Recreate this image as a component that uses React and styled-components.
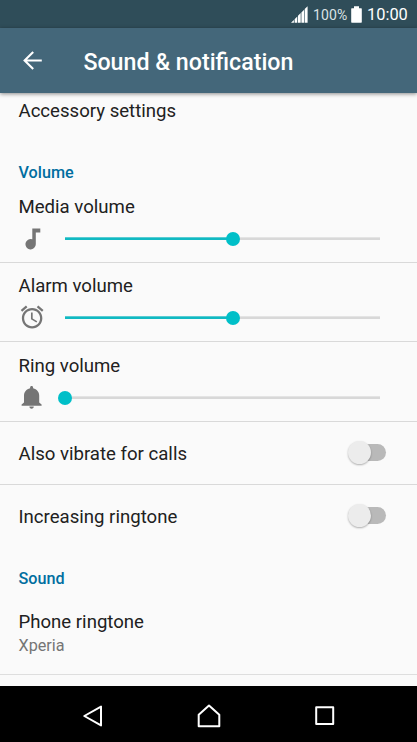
import React from "react";
import styled, { createGlobalStyle } from "styled-components";

const sliders = [
  { title: "Media volume", icon: <NoteIcon />, value: 53.3, height: 80, top: 12 },
  { title: "Alarm volume", icon: <AlarmIcon />, value: 53.3, height: 79, top: 11 },
  { title: "Ring volume", icon: <BellIcon />, value: 0, height: 80, top: 12 },
];

const toggles = ["Also vibrate for calls", "Increasing ringtone"];

export default function App() {
  return (
    <Screen>
      <GlobalStyle />
      <StatusBar>
        <SignalIcon />
        <Battery>100%</Battery>
        <BatteryIcon />
        <Clock>10:00</Clock>
      </StatusBar>
      <AppBar>
        <BackArrow />
        <h1>Sound &amp; notification</h1>
      </AppBar>
      <Content>
        <AccessoryRow>
          <Label>Accessory settings</Label>
        </AccessoryRow>
        <Section $height={54} $bottom={0}>
          Volume
        </Section>
        {sliders.map((item) => (
          <SliderRow key={item.title} $height={item.height} $top={item.top}>
            <Label>{item.title}</Label>
            <div className="control">
              {item.icon}
              <Slider>
                <div className="fill" style={{ width: `${item.value}%` }} />
                <div className="thumb" style={{ left: `${item.value}%` }} />
              </Slider>
            </div>
          </SliderRow>
        ))}
        {toggles.map((title, i) => (
          <ToggleRow key={title} $last={i === toggles.length - 1}>
            <Label>{title}</Label>
            <Switch>
              <span />
            </Switch>
          </ToggleRow>
        ))}
        <Section $height={42} $bottom={1}>
          Sound
        </Section>
        <RingtoneRow>
          <Label>Phone ringtone</Label>
          <p>Xperia</p>
        </RingtoneRow>
      </Content>
      <NavBar>
        <NavBack />
        <NavHome />
        <NavRecent />
      </NavBar>
    </Screen>
  );
}

function SignalIcon() {
  return (
    <svg width="17" height="17" viewBox="0 0 17 17" fill="#fff">
      <path d="M0 16.8 2.9 13.9V16.8ZM3.6 13.2 6.3 10.5V16.8H3.6ZM7 9.8 9.7 7.1V16.8H7ZM10.4 6.4 13.1 3.7V16.8H10.4ZM13.7 3.1 16.6 0.2V16.8H13.7Z" />
    </svg>
  );
}

function BatteryIcon() {
  return (
    <svg width="11" height="17" viewBox="0 0 11 17" fill="#fff">
      <path d="M3 0.3H8V2.2H10.2Q10.8 2.2 10.8 2.8V16Q10.8 16.7 10.2 16.7H0.8Q0.2 16.7 0.2 16V2.8Q0.2 2.2 0.8 2.2H3Z" />
    </svg>
  );
}

function BackArrow() {
  return (
    <svg width="20" height="20" viewBox="0 0 20 20" fill="none" stroke="#fff" strokeWidth="2.1">
      <path d="M18.8 9.5H2M10.2 0.9 1.6 9.5 10.2 18.1" />
    </svg>
  );
}

function NoteIcon() {
  return (
    <svg width="28" height="28" viewBox="0 0 28 28" fill="#757575">
      <path d="M14.3 3.5H22.3V7.5H17.8V19.2A5.2 5.2 0 1 1 14.3 14.3Z" />
    </svg>
  );
}

function AlarmIcon() {
  return (
    <svg width="28" height="28" viewBox="-0.4 0.5 24.6 24.6" fill="#757575">
      <path d="M22 5.72l-4.6-3.86-1.29 1.53 4.6 3.86L22 5.72zM7.88 3.39L6.6 1.86 2 5.71l1.29 1.53 4.59-3.85zM12.5 8H11v6l4.75 2.85.75-1.23-4-2.37V8zM12 4c-4.97 0-9 4.03-9 9s4.02 9 9 9c4.97 0 9-4.03 9-9s-4.03-9-9-9zm0 16c-3.87 0-7-3.13-7-7s3.13-7 7-7 7 3.13 7 7-3.13 7-7 7z" />
    </svg>
  );
}

function BellIcon() {
  return (
    <svg width="28" height="28" viewBox="0 0 28 28" fill="#757575">
      <path d="M11.4 22.6H15.8C15.8 23.9 14.9 24.7 13.6 24.7S11.4 23.9 11.4 22.6ZM13.6 2C12.7 2 12.1 2.6 12.1 3.5V4.2C8.3 5 6 8 6 11.6V18.6L3.6 20.4V21.7H23.6V20.4L21.2 18.6V11.6C21.2 8 18.9 5 15.1 4.2V3.5C15.1 2.6 14.5 2 13.6 2Z" />
    </svg>
  );
}

function NavBack() {
  return (
    <svg width="20" height="22" viewBox="0 0 20 22" fill="none" stroke="#fff" strokeWidth="2" strokeLinejoin="round">
      <path d="M1.3 11 18 1.6V20.4Z" />
    </svg>
  );
}

function NavHome() {
  return (
    <svg width="24" height="24" viewBox="0 0 24 24" fill="none" stroke="#fff" strokeWidth="2" strokeLinejoin="round">
      <path d="M12 1.5 22.3 10.7V22.3H1.7V10.7Z" />
    </svg>
  );
}

function NavRecent() {
  return (
    <svg width="20" height="20" viewBox="0 0 20 20" fill="none" stroke="#fff" strokeWidth="2" strokeLinejoin="round">
      <rect x="1.2" y="1.3" width="17" height="16.6" />
    </svg>
  );
}

const GlobalStyle = createGlobalStyle`
  * {
    box-sizing: border-box;
    margin: 0;
    padding: 0;
  }
  body {
    font-family: Roboto, "Liberation Sans", sans-serif;
    background-color: #fafafa;
    overflow: hidden;
  }
  svg {
    display: block;
    flex-shrink: 0;
  }
`;

const Screen = styled.div`
  display: flex;
  flex-direction: column;
  width: 417px;
  height: 742px;
  background-color: #fafafa;
  color: #212121;
`;

const StatusBar = styled.div`
  display: flex;
  align-items: center;
  justify-content: flex-end;
  height: 28px;
  padding: 1px 9px 0 0;
  flex-shrink: 0;
  background-color: #2f4d59;
  color: white;
`;

const Battery = styled.span`
  width: 34px;
  margin: 0 4px 0 5px;
  font-size: 14px;
  letter-spacing: 0.1px;
  color: #dbe2e5;
`;

const Clock = styled.span`
  width: 41px;
  margin-left: 5px;
  padding-top: 1px;
  font-size: 16.4px;
  line-height: 26px;
`;

const AppBar = styled.header`
  display: flex;
  align-items: center;
  height: 65px;
  padding-left: 23px;
  gap: 40.4px;
  flex-shrink: 0;
  z-index: 1;
  background-color: #44677a;
  color: white;
  box-shadow: 0 1px 4px rgba(0, 0, 0, 0.45);
  h1 {
    padding-top: 2px;
    font-size: 23.2px;
    font-weight: 500;
    white-space: nowrap;
  }
`;

const Content = styled.main`
  flex: 1;
  overflow: hidden;
  background-color: #fafafa;
`;

const Label = styled.div`
  font-size: 18.6px;
  line-height: 24px;
  white-space: nowrap;
`;

const AccessoryRow = styled.div`
  height: 36px;
  padding: 6px 18.5px;
`;

const Section = styled.h2`
  display: flex;
  align-items: flex-end;
  height: ${({ $height }) => $height}px;
  padding: 0 18.5px ${({ $bottom }) => $bottom}px;
  font-size: 16.2px;
  font-weight: 500;
  line-height: 20px;
  color: #006ea0;
`;

const SliderRow = styled.div`
  display: flex;
  flex-direction: column;
  justify-content: space-between;
  height: ${({ $height }) => $height}px;
  padding: ${({ $top }) => $top}px 37px 10px 18px;
  border-bottom: 1px solid #d9d9d9;
  ${Label} {
    padding-left: 0.5px;
  }
  .control {
    display: flex;
    align-items: center;
    height: 28px;
    gap: 19px;
  }
  svg {
    margin-top: 2px;
  }
`;

const Slider = styled.div`
  position: relative;
  flex: 1;
  height: 3px;
  background: linear-gradient(#e4e4e4 1px, #d8d8d8 1px);
  .fill {
    height: 100%;
    background: linear-gradient(#58ccd2 1px, #10b9c2 1px);
  }
  .thumb {
    position: absolute;
    top: -5px;
    width: 14px;
    height: 14px;
    margin-left: -7px;
    border-radius: 50%;
    background-color: #00bfc8;
  }
`;

const ToggleRow = styled.div`
  display: flex;
  align-items: center;
  justify-content: space-between;
  height: 63px;
  padding: 1px 31px 0 18.5px;
  border-bottom: 1px solid ${({ $last }) => ($last ? "transparent" : "#d9d9d9")};
`;

const Switch = styled.div`
  display: flex;
  align-items: center;
  width: 34px;
  height: 17px;
  margin-bottom: 2px;
  border-radius: 9px;
  background-color: #b9b9b9;
  span {
    width: 23px;
    height: 23px;
    margin-left: -4px;
    flex-shrink: 0;
    border-radius: 50%;
    background-color: #ececec;
    box-shadow: 0 1px 2px rgba(0, 0, 0, 0.3);
  }
`;

const RingtoneRow = styled.div`
  height: 85px;
  padding: 20px 18.5px 0;
  border-bottom: 1px solid #dedede;
  p {
    font-size: 16.2px;
    line-height: 23px;
    color: #757575;
  }
`;

const NavBar = styled.nav`
  display: flex;
  align-items: center;
  justify-content: space-between;
  height: 56px;
  padding: 3px 82px 0 82.5px;
  flex-shrink: 0;
  background-color: black;
`;
